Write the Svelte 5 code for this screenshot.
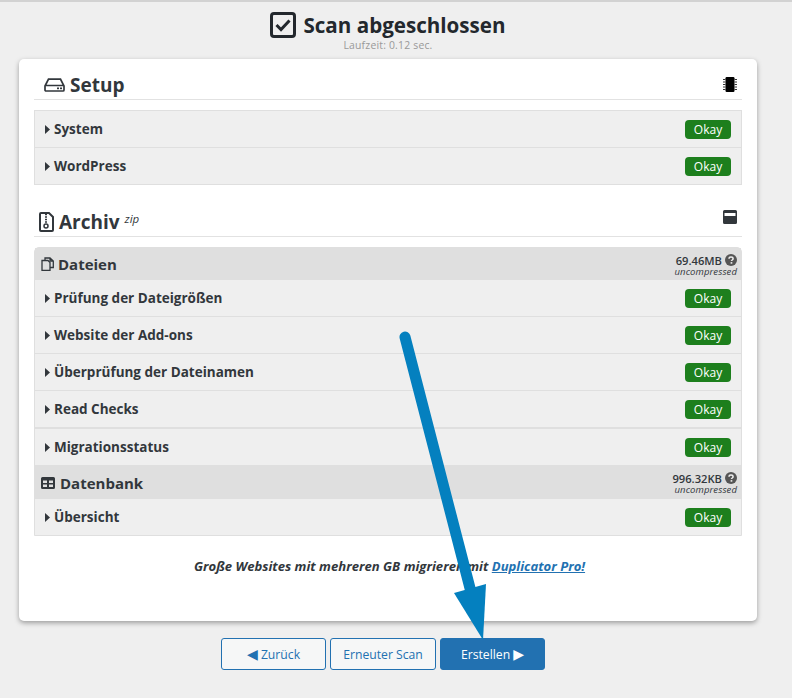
<script>
    const setupRows = ["System", "WordPress"];
    const fileRows = ["Prüfung der Dateigrößen", "Website der Add-ons", "Überprüfung der Dateinamen", "Read Checks"];
</script>

{#snippet caret()}
    <svg class="caret" viewBox="0 0 5 9" width="5" height="9"><path d="M0 0L5 4.5L0 9Z" fill="#32373c" /></svg>
{/snippet}

{#snippet row(name)}
    <div class="row">
        <span class="row-name">{@render caret()}{name}</span>
        <span class="okay">Okay</span>
    </div>
{/snippet}

{#snippet help()}
    <svg class="help" viewBox="0 0 12 12" width="12" height="12">
        <circle cx="6" cy="6" r="6" fill="#555" />
        <path d="M4 4.7C4 3.5 5 3 6 3C7.2 3 8.1 3.7 8.1 4.7C8.1 6 6.5 6 6.5 7.1" fill="none" stroke="#eee" stroke-width="1.5" />
        <rect x="5.6" y="8.1" width="1.7" height="1.6" fill="#eee" />
    </svg>
{/snippet}

<div class="page">
    <header class="title">
        <h1>
            <svg viewBox="0 0 26 26" width="26" height="26">
                <rect x="1.5" y="1.5" width="23" height="23" rx="2.5" fill="none" stroke="#23282d" stroke-width="3" />
                <path d="M6.5 13L11 17.5L19.5 8.5" fill="none" stroke="#23282d" stroke-width="3" />
            </svg>
            Scan abgeschlossen
        </h1>
        <div class="runtime">Laufzeit: 0.12 sec.</div>
    </header>

    <main class="card">
        <div class="section-head">
            <h2>
                <svg viewBox="0 0 21 14" width="21" height="14">
                    <path d="M1 8L4.5 1.2H16.5L20 8V12A1 1 0 0 1 19 13H2A1 1 0 0 1 1 12Z M1 7.5H20" fill="none" stroke="#32373c" stroke-width="1.7" />
                    <rect x="13" y="9.5" width="2" height="1.7" fill="#32373c" />
                    <rect x="16" y="9.5" width="2" height="1.7" fill="#32373c" />
                </svg>
                Setup
            </h2>
            <svg class="chip" viewBox="0 0 14 15" width="14" height="15">
                <rect x="2.5" y="0" width="9" height="15" rx="1.2" fill="#000" />
                <path d="M0 2.5H2.5M0 5H2.5M0 7.5H2.5M0 10H2.5M0 12.5H2.5M11.5 2.5H14M11.5 5H14M11.5 7.5H14M11.5 10H14M11.5 12.5H14" stroke="#333" stroke-width="1" />
            </svg>
        </div>
        <section class="panel">
            {#each setupRows as name}
                {@render row(name)}
            {/each}
        </section>

        <div class="section-head archive">
            <h2>
                <svg viewBox="0 0 15 20" width="15" height="20">
                    <path d="M2 1H10L14 5V18A1 1 0 0 1 13 19H2A1 1 0 0 1 1 18V2A1 1 0 0 1 2 1Z" fill="none" stroke="#32373c" stroke-width="2" />
                    <path d="M6 2.5H8M6 5H8M6 7.5H8M6 10H8" stroke="#32373c" stroke-width="1.3" />
                    <circle cx="7" cy="14" r="2" fill="none" stroke="#32373c" stroke-width="1.5" />
                </svg>
                Archiv <sup>zip</sup>
            </h2>
            <svg class="box" viewBox="0 0 14 14" width="14" height="14">
                <path d="M1.5 0H12.5A1.5 1.5 0 0 1 14 1.5V12.5A1.5 1.5 0 0 1 12.5 14H1.5A1.5 1.5 0 0 1 0 12.5V1.5A1.5 1.5 0 0 1 1.5 0ZM1.5 3V6H12.5V3Z" fill="#32373c" fill-rule="evenodd" />
            </svg>
        </div>
        <section class="panel rounded">
            <div class="group">
                <h3>
                    <svg viewBox="0 0 13 14" width="13" height="14">
                        <path d="M4 3V1H9L12.3 4V10.5H9 M9 1V4H12.3" fill="none" stroke="#32373c" stroke-width="1.3" />
                        <path d="M1 3.5H7L9 5.5V13.3H1Z" fill="none" stroke="#32373c" stroke-width="1.3" />
                    </svg>
                    Dateien
                </h3>
                <div class="size">
                    <div class="size-value">69.46MB {@render help()}</div>
                    <em>uncompressed</em>
                </div>
            </div>
            {#each fileRows as name}
                {@render row(name)}
            {/each}
            <div class="thick"></div>
            <div class="row last">
                <span class="row-name">{@render caret()}Migrationsstatus</span>
                <span class="okay">Okay</span>
            </div>
            <div class="group db">
                <h3>
                    <svg viewBox="0 0 14 12" width="14" height="12">
                        <path d="M1.5 0H12.5A1.5 1.5 0 0 1 14 1.5V10.5A1.5 1.5 0 0 1 12.5 12H1.5A1.5 1.5 0 0 1 0 10.5V1.5A1.5 1.5 0 0 1 1.5 0ZM2 3.5V6H6V3.5ZM8 3.5V6H12V3.5ZM2 7.5V10H6V7.5ZM8 7.5V10H12V7.5Z" fill="#32373c" fill-rule="evenodd" />
                    </svg>
                    Datenbank
                </h3>
                <div class="size">
                    <div class="size-value">996.32KB {@render help()}</div>
                    <em>uncompressed</em>
                </div>
            </div>
            <div class="row last">
                <span class="row-name">{@render caret()}Übersicht</span>
                <span class="okay">Okay</span>
            </div>
        </section>

        <p class="promo">Große Websites mit mehreren GB migrieren mit <a href="#pro">Duplicator Pro!</a></p>
    </main>

    <nav class="actions">
        <button class="btn"><span class="tri">◀</span> Zurück</button>
        <button class="btn mid">Erneuter Scan</button>
        <button class="btn primary">Erstellen <span class="tri">▶</span></button>
    </nav>

    <svg class="arrow" viewBox="0 0 792 698" width="792" height="698">
        <path d="M405 337L471 592" stroke="#0480bf" stroke-width="11" stroke-linecap="round" fill="none" />
        <path d="M454 593L486 584L483 640Z" fill="#0480bf" />
    </svg>
</div>

<style>
    :global(body) {
        background: #efefef;
        font-family: "Open Sans", sans-serif;
        color: #32373c;
    }
    .page {
        position: relative;
        width: 792px;
        height: 698px;
        box-sizing: border-box;
        border-top: 2px solid #d2d2d2;
        overflow: hidden;
    }
    .title {
        text-align: center;
        height: 57px;
        padding: 8px 16px 0 0;
        box-sizing: border-box;
    }
    h1 {
        margin: 0;
        font-size: 20.6px;
        line-height: 30px;
        font-weight: 700;
        color: #23282d;
        display: flex;
        justify-content: center;
        align-items: center;
        gap: 7px;
    }
    .runtime {
        font-size: 10.4px;
        line-height: 12px;
        color: #999;
        margin-top: -1px;
        letter-spacing: 0.2px;
    }
    .card {
        margin-left: 19px;
        width: 738px;
        height: 562px;
        box-sizing: border-box;
        background: #fff;
        border-radius: 5px;
        box-shadow: 0 2px 5px rgba(0, 0, 0, 0.35);
        padding: 0 15px;
    }
    .section-head {
        height: 40px;
        display: flex;
        justify-content: space-between;
        align-items: flex-end;
        border-bottom: 1px solid #e2e2e2;
        padding: 0 5px 0 10px;
    }
    .section-head.archive {
        margin-top: 25px;
        height: 26px;
        padding-left: 5px;
    }
    h2 {
        margin: 0;
        font-size: 19px;
        line-height: 28px;
        font-weight: 700;
        display: flex;
        align-items: center;
        gap: 5px;
    }
    sup {
        font-size: 11.5px;
        font-weight: 400;
        font-style: italic;
        line-height: 1;
        align-self: flex-start;
        margin-top: 5px;
        margin-left: 0;
    }
    .chip {
        margin-bottom: 7px;
    }
    .box {
        margin-bottom: 12px;
    }
    .panel {
        margin-top: 10px;
        border: 1px solid #dfdfdf;
        background: #efefef;
    }
    .panel.rounded {
        border-radius: 5px 5px 0 0;
    }
    .row {
        height: 36px;
        display: flex;
        justify-content: space-between;
        align-items: center;
        padding: 0 10px;
        border-bottom: 1px solid #dfdfdf;
    }
    .row:last-child,
    .row.last {
        border-bottom: 0;
    }
    .row-name {
        font-size: 13.5px;
        font-weight: 700;
        display: flex;
        align-items: center;
        gap: 4px;
    }
    .caret {
        flex: none;
    }
    .okay {
        width: 46px;
        height: 19px;
        border-radius: 4px;
        background: #1d7f1d;
        color: #fff;
        font-size: 12px;
        line-height: 19px;
        text-align: center;
    }
    .thick {
        height: 1px;
        background: #dfdfdf;
    }
    .group {
        height: 32px;
        background: #dfdfdf;
        display: flex;
        justify-content: space-between;
        align-items: center;
        padding: 0 4px 0 6px;
    }
    .group.db {
        height: 34px;
    }
    h3 {
        margin: 0;
        font-size: 15px;
        font-weight: 700;
        display: flex;
        align-items: center;
        gap: 4px;
    }
    .db h3 {
        gap: 5px;
        padding-top: 1px;
    }
    .size {
        text-align: right;
        line-height: 11px;
        padding-top: 3px;
    }
    .size-value {
        font-size: 11.2px;
        font-weight: 600;
        display: flex;
        align-items: center;
        justify-content: flex-end;
        gap: 3px;
    }
    .size em {
        display: block;
        font-size: 9.5px;
        letter-spacing: 0.1px;
    }
    .promo {
        margin: 21px 0 0 3px;
        text-align: center;
        font-size: 13.1px;
        font-weight: 700;
        font-style: italic;
    }
    .promo a {
        color: #2271b1;
    }
    .actions {
        display: flex;
        justify-content: center;
        gap: 4px;
        margin-top: 17px;
        padding-right: 26px;
    }
    .btn {
        width: 105px;
        height: 32px;
        padding: 1px 0 0;
        border: 1px solid #2271b1;
        border-radius: 3px;
        background: #f6f7f7;
        color: #2271b1;
        font-family: "Open Sans", sans-serif;
        font-size: 12.2px;
    }
    .mid {
        width: 106px;
    }
    .tri {
        font-size: 14px;
        font-family: "DejaVu Sans", sans-serif;
    }
    .primary {
        background: #2271b1;
        color: #fff;
    }
    .arrow {
        position: absolute;
        left: 0;
        top: -2px;
        pointer-events: none;
    }
</style>
